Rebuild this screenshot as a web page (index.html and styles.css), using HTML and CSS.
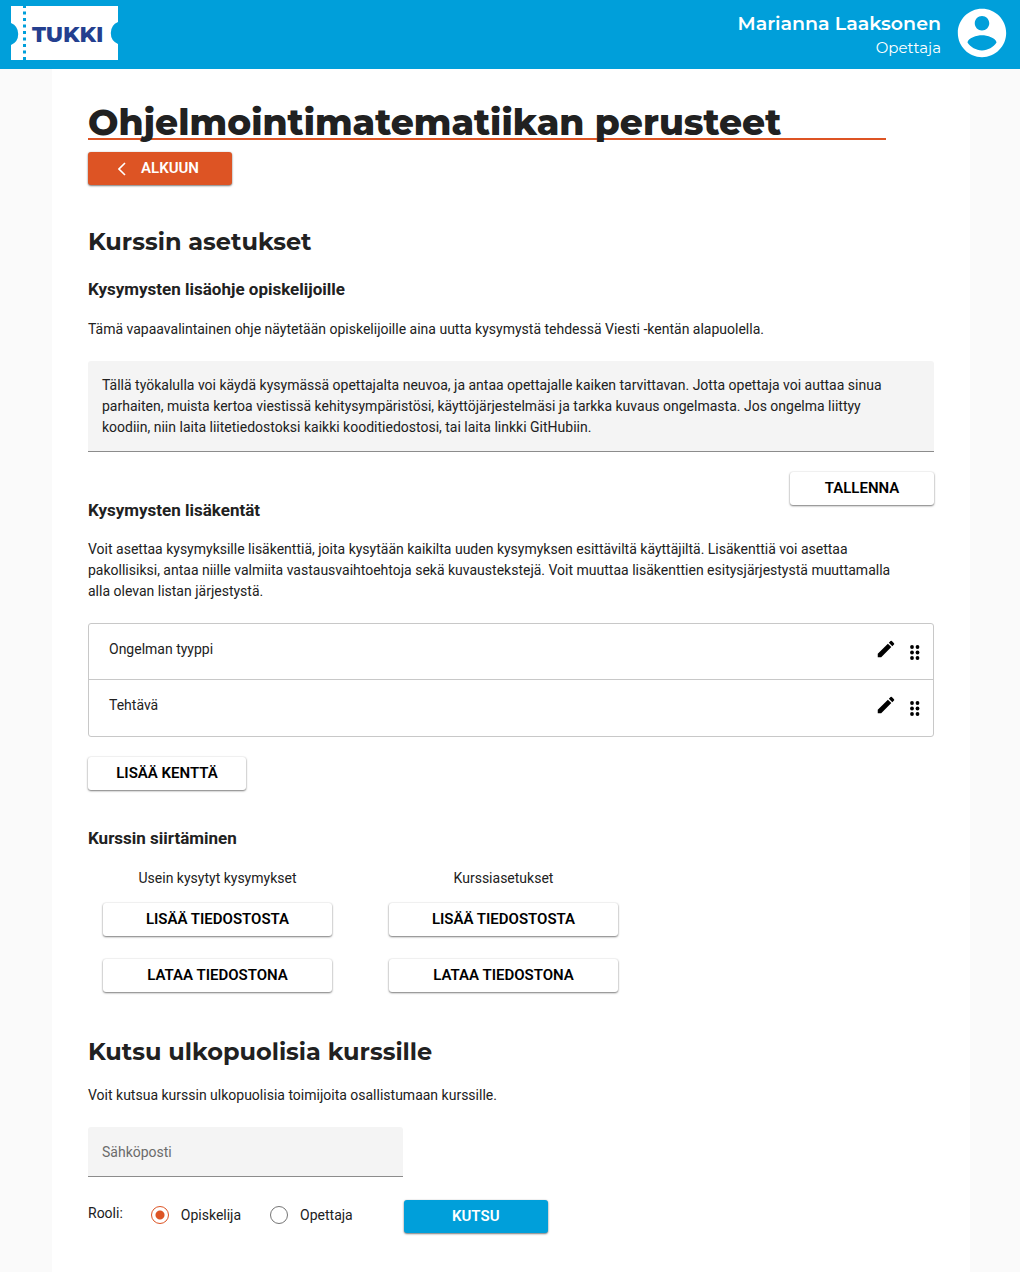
FILE: index.html
```html
<!DOCTYPE html>
<html lang="fi">
<head>
<meta charset="utf-8">
<meta name="viewport" content="width=device-width, initial-scale=1">
<title>Tukki – Kurssin asetukset</title>
<link rel="stylesheet" href="styles.css">
</head>
<body>
<header class="topbar">
  <a class="logo" href="#" aria-label="Tukki">
    <svg width="108" height="54" viewBox="0 0 108 54" aria-hidden="true">
      <path d="M0 0H107V16A12 12 0 0 0 107 38V54H0V39A12 12 0 0 0 0 17Z" fill="#fff"/>
      <path d="M13.500 -1V54" stroke="#009fda" stroke-width="3" stroke-dasharray="3 3.500"/>
      <text class="logo-text" x="21" y="36">TUKKI</text>
    </svg>
  </a>
  <div class="user">
    <div class="user-info">
      <span class="user-name">Marianna Laaksonen</span>
      <span class="user-role">Opettaja</span>
    </div>
    <svg width="58" height="58" viewBox="0 0 24 24" fill="#fff" aria-hidden="true">
      <path d="M12 2C6.480 2 2 6.480 2 12s4.480 10 10 10 10-4.480 10-10S17.520 2 12 2zm0 3c1.660 0 3 1.340 3 3s-1.340 3-3 3-3-1.340-3-3 1.340-3 3-3zm0 14.200c-2.500 0-4.710-1.280-6-3.220.030-1.990 4-3.080 6-3.080 1.990 0 5.970 1.090 6 3.080-1.290 1.940-3.500 3.220-6 3.220z"/>
    </svg>
  </div>
</header>

<main class="page">
  <h1>Ohjelmointimatematiikan perusteet</h1>
  <button class="btn btn-back" type="button">
    <svg width="8" height="14" viewBox="0 0 8 14" fill="none" stroke="#fff" stroke-width="1.600" aria-hidden="true"><path d="M7 1L1 7l6 6"/></svg>
    ALKUUN
  </button>

  <section>
    <h2>Kurssin asetukset</h2>
    <h3><label for="help">Kysymysten lisäohje opiskelijoille</label></h3>
    <p>Tämä vapaavalintainen ohje näytetään opiskelijoille aina uutta kysymystä tehdessä Viesti -kentän alapuolella.</p>
    <textarea id="help" class="field help" rows="3">Tällä työkalulla voi käydä kysymässä opettajalta neuvoa, ja antaa opettajalle kaiken tarvittavan. Jotta opettaja voi auttaa sinua parhaiten, muista kertoa viestissä kehitysympäristösi, käyttöjärjestelmäsi ja tarkka kuvaus ongelmasta. Jos ongelma liittyy koodiin, niin laita liitetiedostoksi kaikki kooditiedostosi, tai laita linkki GitHubiin.</textarea>
    <div class="save-row">
      <h3>Kysymysten lisäkentät</h3>
      <button class="btn" type="button">TALLENNA</button>
    </div>
    <p>Voit asettaa kysymyksille lisäkenttiä, joita kysytään kaikilta uuden kysymyksen esittäviltä käyttäjiltä. Lisäkenttiä voi asettaa pakollisiksi, antaa niille valmiita vastausvaihtoehtoja sekä kuvaustekstejä. Voit muuttaa lisäkenttien esitysjärjestystä muuttamalla alla olevan listan järjestystä.</p>
    <ul class="fields">
      <li>
        <span>Ongelman tyyppi</span>
        <button class="icon-btn" type="button" aria-label="Muokkaa kenttää Ongelman tyyppi">
          <svg width="22" height="22" viewBox="0 0 24 24" aria-hidden="true"><path d="M3 17.250V21h3.750L17.810 9.940l-3.750-3.750L3 17.250zM20.710 7.040a1 1 0 0 0 0-1.410l-2.340-2.340a1 1 0 0 0-1.410 0l-1.830 1.830 3.750 3.750 1.830-1.830z"/></svg>
        </button>
        <svg class="grip" width="10" height="16" viewBox="0 0 10 16" aria-hidden="true"><circle cx="2" cy="3" r="1.900"/><circle cx="7.500" cy="3" r="1.900"/><circle cx="2" cy="8.500" r="1.900"/><circle cx="7.500" cy="8.500" r="1.900"/><circle cx="2" cy="14" r="1.900"/><circle cx="7.500" cy="14" r="1.900"/></svg>
      </li>
      <li>
        <span>Tehtävä</span>
        <button class="icon-btn" type="button" aria-label="Muokkaa kenttää Tehtävä">
          <svg width="22" height="22" viewBox="0 0 24 24" aria-hidden="true"><path d="M3 17.250V21h3.750L17.810 9.940l-3.750-3.750L3 17.250zM20.710 7.040a1 1 0 0 0 0-1.410l-2.340-2.340a1 1 0 0 0-1.410 0l-1.830 1.830 3.750 3.750 1.830-1.830z"/></svg>
        </button>
        <svg class="grip" width="10" height="16" viewBox="0 0 10 16" aria-hidden="true"><circle cx="2" cy="3" r="1.900"/><circle cx="7.500" cy="3" r="1.900"/><circle cx="2" cy="8.500" r="1.900"/><circle cx="7.500" cy="8.500" r="1.900"/><circle cx="2" cy="14" r="1.900"/><circle cx="7.500" cy="14" r="1.900"/></svg>
      </li>
    </ul>
    <button class="btn btn-add" type="button">LISÄÄ KENTTÄ</button>
  </section>

  <section class="transfer">
    <h3>Kurssin siirtäminen</h3>
    <div class="transfer-columns">
      <div class="transfer-column">
        <p>Usein kysytyt kysymykset</p>
        <button class="btn" type="button">LISÄÄ TIEDOSTOSTA</button>
        <button class="btn" type="button">LATAA TIEDOSTONA</button>
      </div>
      <div class="transfer-column">
        <p>Kurssiasetukset</p>
        <button class="btn" type="button">LISÄÄ TIEDOSTOSTA</button>
        <button class="btn" type="button">LATAA TIEDOSTONA</button>
      </div>
    </div>
  </section>

  <section>
    <h2>Kutsu ulkopuolisia kurssille</h2>
    <p>Voit kutsua kurssin ulkopuolisia toimijoita osallistumaan kurssille.</p>
    <form>
      <input class="field email" type="email" placeholder="Sähköposti" aria-label="Sähköposti">
      <div class="invite-row">
        <span class="role-label" id="role">Rooli:</span>
        <div class="roles" role="radiogroup" aria-labelledby="role">
          <label><input type="radio" name="role" checked>Opiskelija</label>
          <label><input type="radio" name="role">Opettaja</label>
        </div>
        <button class="btn btn-invite" type="button">KUTSU</button>
      </div>
    </form>
  </section>
</main>
</body>
</html>
```

FILE: styles.css
```css
* {
  box-sizing: border-box;
}

body {
  margin: 0;
  background: #fafafa;
  color: #212121;
  font: 14px/21px Roboto, sans-serif;
}

h1, h2, h3, p, ul {
  margin: 0;
}

p {
  max-width: 816px;
}

button, input, textarea {
  font: inherit;
  color: inherit;
}

.topbar {
  display: flex;
  align-items: center;
  justify-content: space-between;
  height: 69px;
  padding: 0 9px 4px 11px;
  background: #009fda;
  color: #fff;
  font-family: Montserrat, Inter, sans-serif;
}

.logo svg, .user svg {
  display: block;
}

.logo-text {
  font: 800 22px Montserrat, Inter, sans-serif;
  fill: #243f8f;
}

.user {
  display: flex;
  align-items: center;
  gap: 12px;
}

.user-info {
  display: flex;
  flex-direction: column;
  align-items: flex-end;
  padding-top: 3px;
}

.user-name {
  font-size: 19px;
  font-weight: 600;
  line-height: 26px;
}

.user-role {
  font-size: 15px;
}

.page {
  margin: 0 50px 0 52px;
  padding: 32px 36px 40px;
  background: #fff;
}

h1 {
  max-width: 798px;
  height: 39px;
  border-bottom: 2px solid #dd5424;
  font: 800 36px/42px Montserrat, Inter, sans-serif;
  white-space: nowrap;
}

h2 {
  margin: 41px 0 19px;
  font: 700 24px/32px Montserrat, Inter, sans-serif;
}

h3 {
  font-size: 17px;
  font-weight: 700;
  line-height: 24px;
}

h3 + p {
  margin-top: 18px;
}

.btn {
  display: block;
  min-width: 144px;
  height: 33px;
  padding: 0 16px;
  border: 0;
  border-radius: 3px;
  background: #fff;
  color: #000;
  font-size: 15px;
  font-weight: 600;
  box-shadow: 0 1px 2px rgba(0, 0, 0, 0.5), 0 0 2px rgba(0, 0, 0, 0.12);
}

.btn-back {
  display: flex;
  align-items: center;
  justify-content: center;
  gap: 15px;
  margin-top: 12px;
  padding-right: 19px;
  background: #dd5424;
  color: #fff;
}

.field {
  display: block;
  border: 0;
  border-bottom: 1px solid #8c8c8c;
  border-radius: 3px 3px 0 0;
  background: #f4f4f4;
}

.help {
  width: 100%;
  height: 91px;
  margin-top: 21px;
  padding: 14px 24px 12px 14px;
  overflow: hidden;
  resize: none;
}

.save-row {
  display: flex;
  justify-content: space-between;
  height: 50px;
  margin: 20px 0 17px;
}

.save-row h3 {
  align-self: flex-end;
}

.fields {
  margin: 21px 0 20px;
  padding: 0;
  border: 1px solid #c8c8c8;
  border-radius: 3px;
  list-style: none;
}

.fields li {
  display: flex;
  align-items: flex-start;
  height: 56px;
  padding: 14px 13px 0 20px;
  border-bottom: 1px solid #c8c8c8;
}

.fields li:last-child {
  border-bottom: 0;
}

.fields span {
  flex: 1;
  padding-top: 1px;
}

.icon-btn {
  padding: 0;
  border: 0;
  background: none;
}

.icon-btn svg {
  display: block;
}

.grip {
  margin: 6px 0 0 13px;
}

.btn-add {
  min-width: 158px;
}

.transfer {
  margin: 36px 0 44px;
}

.transfer-columns {
  display: flex;
  gap: 57px;
  margin-top: 18px;
  padding-left: 15px;
}

.transfer-column {
  display: flex;
  flex-direction: column;
  gap: 23px;
  width: 229px;
}

.transfer-column p {
  margin-bottom: -9px;
  text-align: center;
}

.transfer + section h2 {
  margin: 0 0 17px;
}

.email {
  width: 315px;
  max-width: 100%;
  height: 50px;
  margin-top: 21px;
  padding: 0 14px;
}

.email::placeholder {
  color: #6b6b6b;
  opacity: 1;
}

.invite-row {
  display: flex;
  align-items: center;
  margin-top: 23px;
}

.role-label {
  padding-bottom: 6px;
}

.roles {
  display: flex;
  gap: 29px;
  margin: 0 51px 0 28px;
  padding-bottom: 3px;
}

.roles label {
  display: flex;
  align-items: center;
  gap: 12px;
}

.roles input {
  width: 18px;
  height: 18px;
  margin: 0;
  appearance: none;
  border: 1px solid #757575;
  border-radius: 50%;
}

.roles input:checked {
  border-color: #dd5424;
  background: radial-gradient(circle, #dd5424 4px, transparent 5px);
}

.btn-invite {
  background: #009fda;
  color: #fff;
}
```
